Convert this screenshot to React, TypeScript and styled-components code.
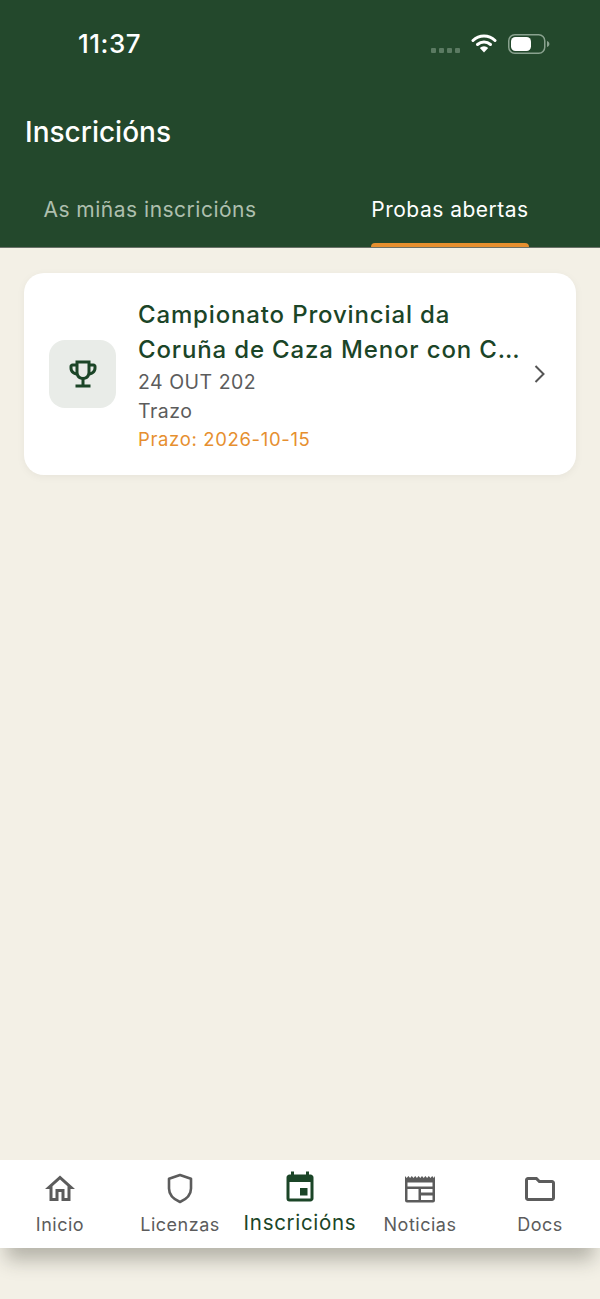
import React from "react";
import styled, { createGlobalStyle } from "styled-components";
import {
  MdEvent,
  MdOutlineEmojiEvents,
  MdOutlineFolder,
  MdOutlineHome,
} from "react-icons/md";

const GlobalStyle = createGlobalStyle`
  html, body {
    margin: 0;
    padding: 0;
    background: #f3f0e6;
  }
  * {
    box-sizing: border-box;
  }
`;

const GREEN = "#23482c";
const DARK = "#1b4527";
const ORANGE = "#e68f2f";
const GREY = "#5c5c5c";

const Page = styled.div`
  width: 600px;
  height: 1299px;
  display: flex;
  flex-direction: column;
  overflow: hidden;
  background: #f3f0e6;
  font-family: Inter, "Noto Sans", sans-serif;
`;

const Header = styled.header`
  height: 248px;
  display: flex;
  flex-direction: column;
  background: ${GREEN};
  border-bottom: 1px solid #6a7169;
`;

const StatusBar = styled.div`
  height: 88px;
  display: flex;
  align-items: center;
  padding: 0 50px 0 78px;
`;

const Clock = styled.span`
  flex: 1;
  margin-top: -2px;
  color: #fff;
  font-size: 26px;
  font-weight: 500;
  letter-spacing: 0.5px;
`;

const StatusIcons = styled.div`
  display: flex;
  align-items: center;
  gap: 11px;
`;

const Signal = styled.div`
  display: flex;
  gap: 3px;
  margin-top: 12px;
`;

const SignalDot = styled.i`
  width: 5px;
  height: 5px;
  border-radius: 1px;
  background: #5b7a62;
`;

const Title = styled.h1`
  margin: 26px 0 0 25px;
  height: 36px;
  color: #fff;
  font-size: 28px;
  line-height: 36px;
  font-weight: 500;
`;

const Tabs = styled.nav`
  flex: 1;
  display: flex;
  margin-top: 28px;
`;

const Tab = styled.div`
  width: 300px;
  display: flex;
  justify-content: center;
`;

const TabLabel = styled.span<{ $active?: boolean }>`
  position: relative;
  height: 100%;
  padding-top: 17px;
  color: ${(p) => (p.$active ? "#fff" : "#aebfae")};
  font-size: 21px;
  line-height: 30px;
  letter-spacing: 0.5px;

  ${(p) =>
    p.$active &&
    `&::after {
      content: "";
      position: absolute;
      left: 0;
      right: 0;
      bottom: 0;
      height: 4px;
      border-radius: 4px 4px 0 0;
      background: ${ORANGE};
    }`}
`;

const Main = styled.main`
  flex: 1;
  padding: 25px 24px 0;
`;

const Card = styled.article`
  height: 202px;
  display: flex;
  align-items: center;
  padding: 0 19px 0 25px;
  border-radius: 20px;
  background: #fff;
  box-shadow: 0 2px 8px rgba(0, 0, 0, 0.05);
`;

const IconBox = styled.div`
  width: 67px;
  height: 68px;
  flex: none;
  display: flex;
  align-items: center;
  justify-content: center;
  border-radius: 16px;
  background: #e9ece8;
  color: ${DARK};
`;

const CardBody = styled.div`
  flex: 1;
  min-width: 0;
  margin-left: 22px;
`;

const CardTitle = styled.h2`
  margin: 0 0 1px;
  color: ${DARK};
  font-size: 24px;
  line-height: 35px;
  font-weight: 500;
  letter-spacing: 0.85px;
`;

const TitleLine = styled.span`
  display: block;
  overflow: hidden;
  white-space: nowrap;
  text-overflow: ellipsis;
`;

const Meta = styled.div<{ $accent?: boolean }>`
  color: ${(p) => (p.$accent ? ORANGE : GREY)};
  font-size: ${(p) => (p.$accent ? 18.5 : 19.5)}px;
  line-height: ${(p) => (p.$accent ? 26 : 29)}px;
  letter-spacing: ${(p) => (p.$accent ? 0.65 : 0.5)}px;
`;

const Chevron = styled.div`
  flex: none;
  display: flex;
  width: 34px;
  height: 34px;
  align-items: center;
  justify-content: center;
  color: #555;
`;

const BottomNav = styled.nav`
  height: 88px;
  flex: none;
  display: flex;
  background: #fff;
  box-shadow: 0 18px 18px -6px rgba(40, 40, 30, 0.3);
`;

const NavItem = styled.div<{ $active?: boolean }>`
  flex: 1;
  display: flex;
  flex-direction: column;
  align-items: center;
  padding-top: ${(p) => (p.$active ? 10 : 11)}px;
  color: ${(p) => (p.$active ? DARK : GREY)};
`;

const NavIcon = styled.div`
  height: 35px;
  display: flex;
  align-items: center;
  justify-content: center;
`;

const NavLabel = styled.span<{ $active?: boolean }>`
  margin-top: ${(p) => (p.$active ? 6 : 7)}px;
  font-size: ${(p) => (p.$active ? 20.5 : 18)}px;
  line-height: 24px;
  letter-spacing: ${(p) => (p.$active ? 0.7 : 0.5)}px;
`;

const BottomSpace = styled.div`
  height: 51px;
  flex: none;
`;

function WifiIcon() {
  return (
    <svg width="26" height="20" viewBox="0 0 26 20" fill="none">
      <path d="M2 6.500a16 16 0 0 1 22 0" stroke="#fff" strokeWidth="3" strokeLinecap="round" />
      <path d="M6.500 10.500a10 10 0 0 1 13 0" stroke="#fff" strokeWidth="3" strokeLinecap="round" />
      <path d="M13 18.500l-4.200-4.600a6 6 0 0 1 8.400 0z" fill="#fff" />
    </svg>
  );
}

function BatteryIcon() {
  return (
    <svg width="42" height="20" viewBox="0 0 42 20" fill="none">
      <rect x="0.750" y="0.750" width="36" height="18.500" rx="6" stroke="#8aa28f" strokeWidth="1.500" />
      <rect x="3" y="3" width="20" height="14" rx="4.500" fill="#fff" />
      <path d="M39 7v6c1.600-.6 2.400-1.700 2.400-3S40.600 7.600 39 7z" fill="#8aa28f" />
    </svg>
  );
}

function ShieldIcon() {
  return (
    <svg width="26" height="31" viewBox="0 0 26 31" fill="none">
      <path
        d="M13 2l11 3.800v9.700c0 6-4.500 10.700-11 13.500C6.500 26.200 2 21.500 2 15.500V5.800z"
        stroke="currentColor"
        strokeWidth="2.600"
        strokeLinejoin="round"
      />
    </svg>
  );
}

function NewsIcon() {
  return (
    <svg width="32" height="28" viewBox="0 0 32 28">
      <path
        fill="currentColor"
        d="M1 1l1.700 2 1.700-2 1.700 2 1.700-2 1.700 2 1.700-2 1.700 2 1.700-2 1.700 2 1.700-2 1.700 2 1.700-2 1.700 2 1.700-2 1.700 2 1.700-2 1.600 2 0 0L31 1v24.500a2 2 0 0 1-2 2H3a2 2 0 0 1-2-2z"
      />
      <path
        fill="#fff"
        d="M3.500 7.500h25v4h-25zM3.500 14h11v11h-11zM17 14h11.500v3.500H17zM17 20.500h11.500V25H17z"
      />
    </svg>
  );
}

function ChevronIcon() {
  return (
    <svg width="14" height="20" viewBox="0 0 14 20" fill="none">
      <path d="M2.500 2l8 8-8 8" stroke="currentColor" strokeWidth="2" />
    </svg>
  );
}

const navItems = [
  { label: "Inicio", icon: <MdOutlineHome size={36} /> },
  { label: "Licenzas", icon: <ShieldIcon /> },
  { label: "Inscricións", icon: <MdEvent size={36} />, active: true },
  { label: "Noticias", icon: <NewsIcon /> },
  { label: "Docs", icon: <MdOutlineFolder size={36} /> },
];

export default function App() {
  return (
    <Page>
      <GlobalStyle />
      <Header>
        <StatusBar>
          <Clock>11:37</Clock>
          <StatusIcons>
            <Signal>
              <SignalDot />
              <SignalDot />
              <SignalDot />
              <SignalDot />
            </Signal>
            <WifiIcon />
            <BatteryIcon />
          </StatusIcons>
        </StatusBar>
        <Title>Inscricións</Title>
        <Tabs>
          <Tab>
            <TabLabel>As miñas inscricións</TabLabel>
          </Tab>
          <Tab>
            <TabLabel $active>Probas abertas</TabLabel>
          </Tab>
        </Tabs>
      </Header>
      <Main>
        <Card>
          <IconBox>
            <MdOutlineEmojiEvents size={36} />
          </IconBox>
          <CardBody>
            <CardTitle>
              <TitleLine>Campionato Provincial da</TitleLine>
              <TitleLine>Coruña de Caza Menor con Can</TitleLine>
            </CardTitle>
            <Meta>24 OUT 202</Meta>
            <Meta>Trazo</Meta>
            <Meta $accent>Prazo: 2026-10-15</Meta>
          </CardBody>
          <Chevron>
            <ChevronIcon />
          </Chevron>
        </Card>
      </Main>
      <BottomNav>
        {navItems.map((item) => (
          <NavItem key={item.label} $active={item.active}>
            <NavIcon>{item.icon}</NavIcon>
            <NavLabel $active={item.active}>{item.label}</NavLabel>
          </NavItem>
        ))}
      </BottomNav>
      <BottomSpace />
    </Page>
  );
}
